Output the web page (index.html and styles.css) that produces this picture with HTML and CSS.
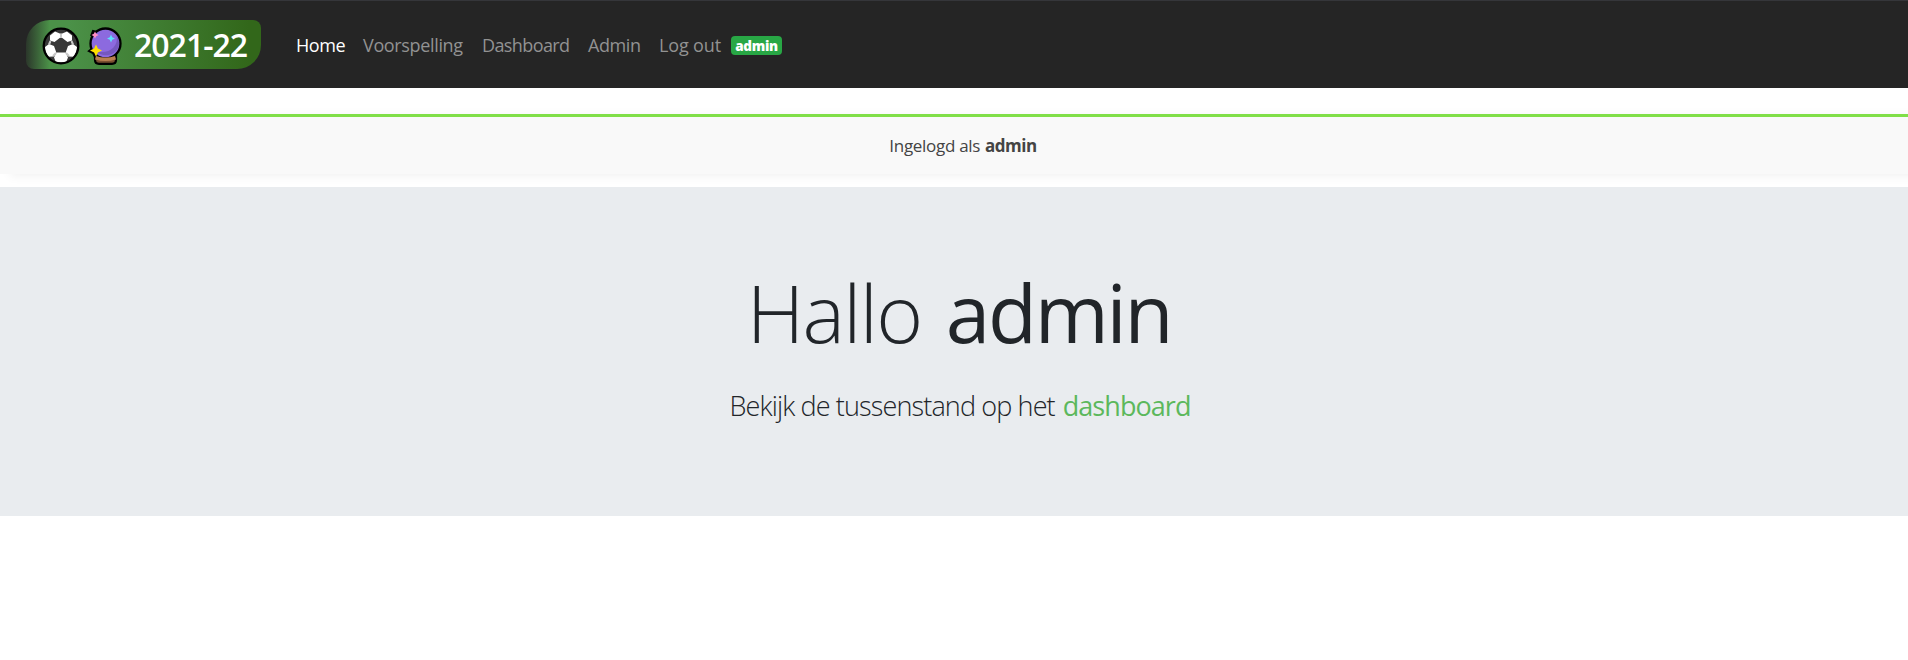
FILE: index.html
```html
<!DOCTYPE html>
<html lang="nl">
<head>
<meta charset="utf-8">
<title>Voorspelling 2021-22</title>
<link rel="stylesheet" href="styles.css">
</head>
<body>
<nav class="navbar">
  <a class="brand">
    <svg class="ball" viewBox="0 0 38 38" width="38" height="38">
      <circle cx="19" cy="19" r="17.3" fill="#383838"/>
      <g fill="#fff">
        <path d="M19 10l-6.500 5-4.500-1.500v-5L13 4.500l6 2.500 6-2.500 5 4v5L25.500 15z"/>
        <path d="M3 20l4-3 5 2 2.500 7-3 3.500-5 .2C4 27 3 24 3 20zM35 20l-4-3-5 2-2.500 7 3 3.500 5 .2C34 27 35 24 35 20z"/>
        <path d="M14.500 25.500h9l2.500 5-2 5H14l-2-5z"/>
      </g>
      <path d="M19 6.500V11M8.500 14l-1.500 3.500M29.500 14l1.500 3.500M11 29l3-3M27 29l-3-3" stroke="#c9c9c9" stroke-width="2"/>
      <path d="M19 13l6.200 4.600-2.400 7.200h-7.600l-2.400-7.200z" fill="#383838"/>
      <circle cx="19" cy="19" r="17.300" fill="none" stroke="#000" stroke-width="2.300"/>
    </svg>
    <svg class="crystal" viewBox="0 0 38 38" width="38" height="38">
      <path d="M9 29h21v4q0 3.800-4 3.800H13q-4 0-4-3.800z" fill="#7a4f30" stroke="#000" stroke-width="2.200"/>
      <path d="M5 9l2-5 4 1M8 20l-5 4 4 2 2 4" fill="#000" stroke="#000" stroke-width="2"/>
      <circle cx="19.500" cy="16.500" r="15" fill="#8c6adf" stroke="#000" stroke-width="2.300"/>
      <path d="M30.500 8.500c3.500 6 3.500 12-1 16-5 5-14 5-19 0 7 1.500 13 0 17-4 3-3.500 4-7.500 3-12z" fill="#7558be"/>
      <path d="M10 29q9.500 3 19 0l1 3.500q-10.500 3-21 0z" fill="#b97f50"/>
      <path d="M9 4.500l1.200 2.300 2.500 1.200-2.500 1.200L9 11.500 7.800 9.200 5.500 8l2.300-1.200z" fill="#ff8dc3"/>
      <path d="M25 7.500l1.200 2.800 2.800 1.200-2.800 1.200-1.200 2.800-1.200-2.800-2.800-1.200 2.800-1.200z" fill="#5edfff"/>
      <path d="M10 17.500l1.900 4.100 4.100 1.900-4.100 1.900L10 29.500l-1.900-4.100L4 23.500l4.100-1.900z" fill="#ffe100"/>
    </svg>
    <span class="season">2021-22</span>
  </a>
  <div class="links">
    <a class="link active w-home">Home</a>
    <a class="link w-voor">Voorspelling</a>
    <a class="link w-dash">Dashboard</a>
    <a class="link w-admin">Admin</a>
    <a class="link w-log">Log out</a>
    <span class="badge">admin</span>
  </div>
</nav>
<div class="status"><span class="status-label">Ingelogd als</span><b class="status-user">admin</b></div>
<main class="hero">
  <h1 class="title"><span class="hello">Hallo</span><span class="name">admin</span></h1>
  <p class="lead"><span class="lead-text">Bekijk de tussenstand op het</span><a class="lead-link">dashboard</a></p>
</main>
</body>
</html>
```
FILE: styles.css
```css
* { box-sizing: border-box; }
body { margin: 0; background: #fff; color: #212529; font-family: "Segoe UI", "Open Sans", "Noto Sans", sans-serif; overflow: hidden; }
.navbar { display: flex; align-items: flex-start; height: 88px; padding: 19px 26px 20px; background: #252525; border-top: 1px solid #35363a; }
.brand { display: flex; align-items: center; width: 235px; height: 49px; padding-left: 16px; border-radius: 24px 8px 24px 8px; background: linear-gradient(90deg, #252525 -2%, #4b9148 10%, #4b9148 18%, #32671a 95%); color: #fff; }
.ball, .crystal { flex: none; display: block; margin-top: 2px; }
.crystal { margin-left: 6px; }
.season { margin-left: 10px; padding-top: 1px; font-size: 32px; line-height: 48px; font-weight: 600; letter-spacing: -1px; white-space: nowrap; }
.links { display: flex; align-items: center; height: 49px; margin-left: 35px; padding-top: 2px; }
.link { flex: none; font-size: 18px; line-height: 27px; letter-spacing: -0.4px; color: #929292; white-space: nowrap; }
.active { color: #fff; }
.w-home { width: 67px; }
.w-voor { width: 119px; letter-spacing: -0.35px; }
.w-dash { width: 106px; letter-spacing: -0.6px; }
.w-admin { width: 71px; }
.w-log { width: 72px; letter-spacing: -0.15px; }
.badge { width: 51px; height: 19px; border-radius: 4px; background: #28a745; color: #fff; font-size: 13.500px; line-height: 21px; font-weight: 800; letter-spacing: -0.3px; text-align: center; }
.status { display: flex; justify-content: center; align-items: center; height: 60px; margin-top: 26px; padding-left: 18px; border-top: 3px solid #80df48; background: #f9f9f9; color: #444; font-size: 17px; box-shadow: 10px 2px 10px rgba(0,0,0,.06); }
.status-label { letter-spacing: -0.3px; }
.status-user { margin-left: 5px; letter-spacing: -0.5px; }
.hero { height: 329px; margin-top: 13px; padding: 65px 0 0 14px; background: #e9ecef; position: relative; }
.title { display: flex; justify-content: center; margin: 0 4px 0 0; font-size: 80px; line-height: 120px; font-weight: 300; }
.hello { letter-spacing: -1.6px; }
.name { margin-left: 24px; font-weight: 500; letter-spacing: -2.2px; }
.lead { display: flex; justify-content: center; margin: 14px 2px 0 0; font-size: 27px; line-height: 40px; font-weight: 300; }
.lead-text { letter-spacing: -0.87px; }
.lead-link { margin-left: 8px; color: #5cb85c; font-weight: 400; letter-spacing: -0.95px; }
```
